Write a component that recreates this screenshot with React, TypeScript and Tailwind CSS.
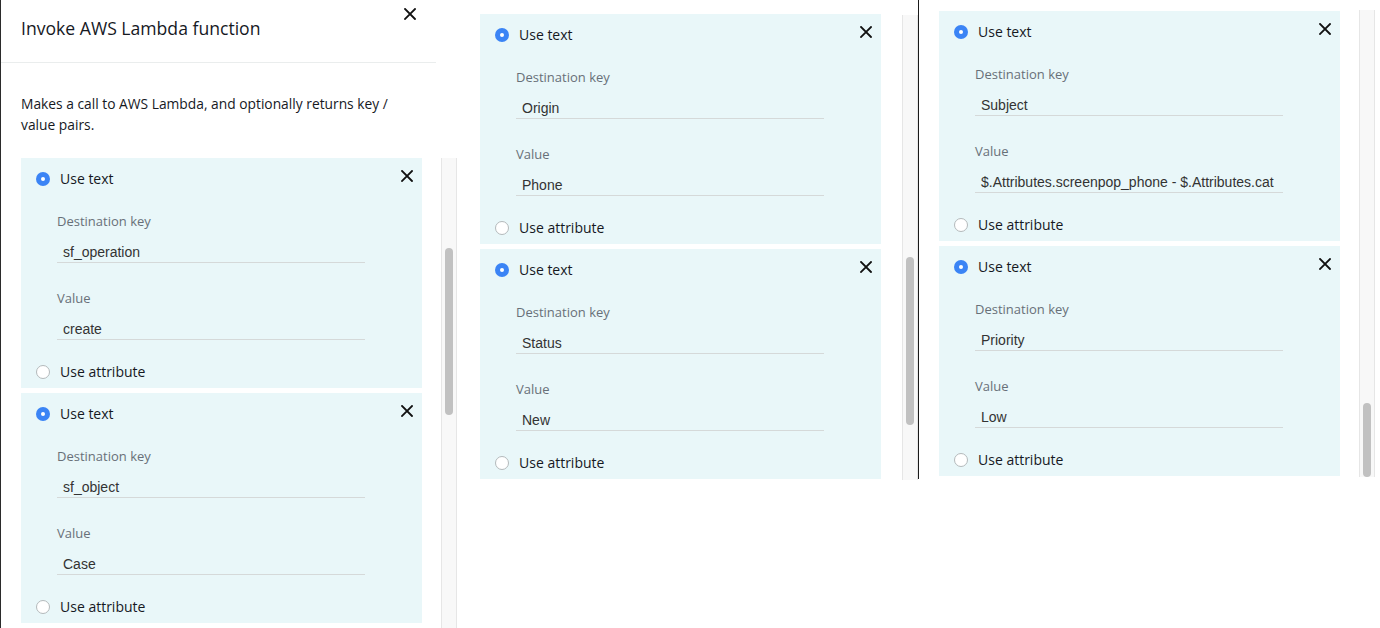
import React from "react";

type Pair = { k: string; v: string };

const ui = { fontFamily: '"Open Sans", "Noto Sans", sans-serif' };
const field = { fontFamily: '"Liberation Sans", Arial, sans-serif' };

function CloseIcon({ className = "" }: { className?: string }) {
  return (
    <svg viewBox="0 0 12 12" className={className} fill="none" stroke="#111" strokeWidth="1.8" strokeLinecap="square">
      <path d="M1 1 L11 11 M11 1 L1 11" />
    </svg>
  );
}

function Radio({ on }: { on: boolean }) {
  if (on)
    return (
      <span className="flex h-[14px] w-[14px] shrink-0 items-center justify-center rounded-full bg-[#3b84f5]">
        <span className="h-[4px] w-[4px] rounded-full bg-white" />
      </span>
    );
  return <span className="h-[14px] w-[14px] shrink-0 rounded-full border border-[#b4b9bb] bg-white" />;
}

function Card({ k, v }: Pair) {
  return (
    <div className="relative h-[230px] w-[401px] shrink-0 bg-[#e9f7f9] text-[14px] text-[#16191f]" style={ui}>
      <CloseIcon className="absolute right-[9px] top-[12px] h-[12px] w-[12px]" />
      <div className="mt-[11px] flex h-[20px] items-center gap-[10px] pl-[15px]">
        <Radio on />
        <span className="leading-[20px]">Use text</span>
      </div>
      <div className="pl-[36px]">
        <div className="mt-[22px] h-[20px] text-[13px] leading-[20px] text-[#687078]">Destination key</div>
        <div
          className="mt-[11px] h-[21px] w-[308px] overflow-hidden whitespace-nowrap border-b border-[#d5d9d9] pl-[6px] text-[14px] leading-[20px] text-[#333]"
          style={field}
        >
          {k}
        </div>
        <div className="mt-[25px] h-[20px] text-[13px] leading-[20px] text-[#687078]">Value</div>
        <div
          className="mt-[11px] h-[21px] w-[308px] overflow-hidden whitespace-nowrap border-b border-[#d5d9d9] pl-[6px] text-[14px] leading-[20px] text-[#333]"
          style={field}
        >
          {v}
        </div>
      </div>
      <div className="mt-[22px] flex h-[20px] items-center gap-[10px] pl-[15px]">
        <Radio on={false} />
        <span className="leading-[20px]">Use attribute</span>
      </div>
    </div>
  );
}

function Track({ top, height, className = "" }: { top: string; height: string; className?: string }) {
  return (
    <div className={`flex w-[16px] shrink-0 flex-col items-center border-x border-[#e6e6e6] bg-[#f8f8f8] ${className}`}>
      <div className={`w-[8px] rounded-full bg-[#c1c1c1] ${top} ${height}`} />
    </div>
  );
}

export default function App() {
  return (
    <div className="flex h-[628px] w-[1380px] overflow-hidden bg-white">
      {/* panel 1 */}
      <div className="flex w-[458px] shrink-0 flex-col border-l border-[#2b2b2b]">
        <div className="flex h-[63px] w-[435px] shrink-0 items-start justify-between border-b border-[#eaeded]">
          <h2 className="ml-[20px] mt-[17px] text-[17.6px] leading-[22px] text-[#16191f]" style={ui}>
            Invoke AWS Lambda function
          </h2>
          <CloseIcon className="mr-[20px] mt-[8px] h-[12px] w-[12px]" />
        </div>
        <p className="ml-[20px] mt-[30px] whitespace-nowrap text-[13.8px] leading-[21px] text-[#16191f]" style={ui}>
          Makes a call to AWS Lambda, and optionally returns key /
          <br />
          value pairs.
        </p>
        <div className="mt-[23px] flex min-h-0 flex-1">
          <div className="ml-[20px] flex flex-col gap-[5px]">
            <Card k="sf_operation" v="create" />
            <Card k="sf_object" v="Case" />
          </div>
          <Track className="ml-[19px]" top="mt-[90px]" height="h-[167px]" />
        </div>
      </div>

      {/* panel 2 */}
      <div className="flex h-[479px] w-[461px] shrink-0 border-r border-[#1a1a1a] pt-[15px]">
        <div className="ml-[22px] -mt-[1px] flex flex-col gap-[5px]">
          <Card k="Origin" v="Phone" />
          <Card k="Status" v="New" />
        </div>
        <Track className="ml-[21px] h-[465px]" top="mt-[242px]" height="h-[168px]" />
      </div>

      {/* panel 3 */}
      <div className="flex h-[477px] shrink-0 pt-[10px]">
        <div className="ml-[20px] mt-[1px] flex flex-col gap-[5px]">
          <Card k="Subject" v="$.Attributes.screenpop_phone - $.Attributes.cat" />
          <Card k="Priority" v="Low" />
        </div>
        <Track className="ml-[19px] h-[467px]" top="mt-[393px]" height="h-[74px]" />
      </div>
    </div>
  );
}
